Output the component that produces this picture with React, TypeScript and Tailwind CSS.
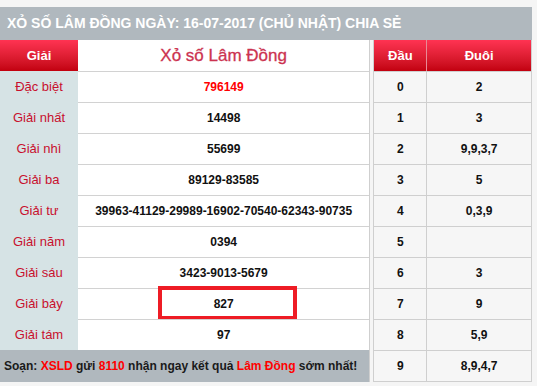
const prizes: { label: string; value: string; special?: boolean; boxed?: boolean }[] = [
  { label: "Đặc biệt", value: "796149", special: true },
  { label: "Giải nhất", value: "14498" },
  { label: "Giải nhì", value: "55699" },
  { label: "Giải ba", value: "89129-83585" },
  { label: "Giải tư", value: "39963-41129-29989-16902-70540-62343-90735" },
  { label: "Giải năm", value: "0394" },
  { label: "Giải sáu", value: "3423-9013-5679" },
  { label: "Giải bảy", value: "827", boxed: true },
  { label: "Giải tám", value: "97" },
];

const loto = [
  ["0", "2"],
  ["1", "3"],
  ["2", "9,9,3,7"],
  ["3", "5"],
  ["4", "0,3,9"],
  ["5", ""],
  ["6", "3"],
  ["7", "9"],
  ["8", "5,9"],
  ["9", "8,9,4,7"],
];

const App: React.FC = () => {
  return (
    <div className="min-h-screen bg-[#f5f5f5] pt-[7px] font-['Liberation_Sans',Arial,sans-serif]">
      <div className="w-[532px]">
        <div className="h-[33px] bg-[#b0b8be] flex items-center pl-[7px] text-[14px] font-bold text-white">
          XỎ SỐ LÂM ĐỒNG NGÀY: 16-07-2017 (CHỦ NHẬT) CHIA SẺ
        </div>

        <div className="flex gap-[3px]">
          {/* bang ket qua */}
          <div className="w-[371px] bg-white border-r border-[#cfcfcf]">
            <div className="flex h-[31px]">
              <div className="w-[78px] flex items-center justify-center bg-gradient-to-b from-[#ff3352] to-[#c2000e] text-white font-bold text-[13px]">
                Giải
              </div>
              <div className="flex-1 flex items-center justify-center text-[17px] text-[#cc3350] [-webkit-text-stroke:0.3px_#cc3350]">
                Xỏ số Lâm Đồng
              </div>
            </div>
            {prizes.map((p) => (
              <div key={p.label} className="flex h-[31px]">
                <div className="w-[78px] bg-[#d6e3e5] flex items-center justify-center text-[13px] text-[#c8102e]">
                  {p.label}
                </div>
                <div
                  className={`relative flex-1 border-t border-[#d2d2d2] flex items-center justify-center text-[12px] font-bold ${
                    p.special ? "text-[#ff0000]" : "text-[#111]"
                  }`}
                >
                  {p.value}
                  {p.boxed && (
                    <div className="absolute left-[80px] top-[-3px] w-[139px] h-[34px] border-[4px] border-[#ee1c25]" />
                  )}
                </div>
              </div>
            ))}
            <div className="h-[32px] bg-[#b0b8be] flex items-center pl-[4px] text-[12px] font-bold text-[#1a1a1a]">
              Soạn:&nbsp;<span className="text-[#ff0000]">XSLD</span>&nbsp;gửi&nbsp;
              <span className="text-[#ff0000]">8110</span>&nbsp;nhận ngay kết quả&nbsp;
              <span className="text-[#ff0000]">Lâm Đồng</span>&nbsp;sớm nhất!
            </div>
          </div>

          {/* dau duoi */}
          <div className="w-[159px] self-start border border-t-0 border-[#cfcfcf] bg-[#f6f6f6]">
            <div className="flex h-[31px] bg-gradient-to-b from-[#ff3352] to-[#c2000e] text-white font-bold text-[13px]">
              <div className="w-[53px] flex items-center justify-center border-r border-[#e88a95]">Đầu</div>
              <div className="flex-1 flex items-center justify-center">Đuôi</div>
            </div>
            {loto.map(([d, t]) => (
              <div key={d} className="flex h-[31px] border-t border-[#cfcfcf] text-[12px] font-bold text-[#111]">
                <div className="w-[53px] flex items-center justify-center border-r border-[#cfcfcf]">{d}</div>
                <div className="flex-1 flex items-center justify-center">{t}</div>
              </div>
            ))}
          </div>
        </div>
      </div>
    </div>
  );
};

export default App;
